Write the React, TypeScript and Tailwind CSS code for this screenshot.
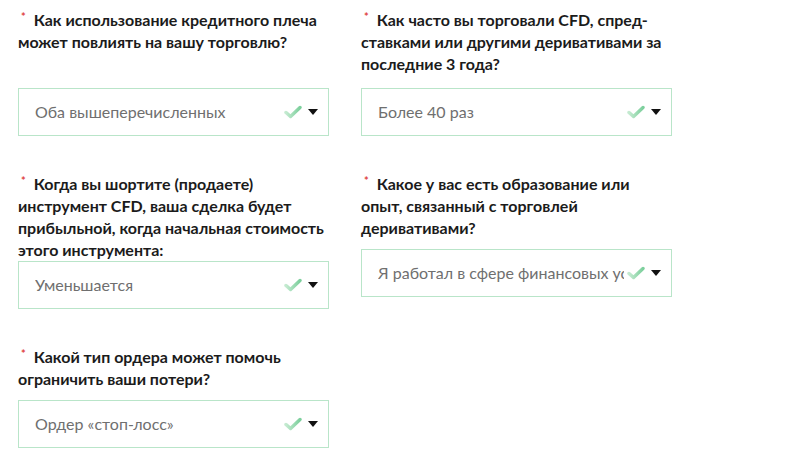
const fields = [
  {
    lines: ["Как использование кредитного плеча", "может повлиять на вашу торговлю?"],
    value: "Оба вышеперечисленных",
    labelH: "h-[79px]",
  },
  {
    lines: ["Как часто вы торговали CFD, спред-", "ставками или другими деривативами за", "последние 3 года?"],
    value: "Более 40 раз",
    labelH: "h-[79px]",
  },
  {
    lines: [
      "Когда вы шортите (продаете)",
      "инструмент CFD, ваша сделка будет",
      "прибыльной, когда начальная стоимость",
      "этого инструмента:",
    ],
    value: "Уменьшается",
    labelH: "h-[88px]",
  },
  {
    lines: ["Какое у вас есть образование или", "опыт, связанный с торговлей", "деривативами?"],
    value: "Я работал в сфере финансовых услуг",
    labelH: "h-[76px]",
  },
  {
    lines: ["Какой тип ордера может помочь", "ограничить ваши потери?"],
    value: "Ордер «стоп-лосс»",
    labelH: "h-[54px]",
  },
];

function Check() {
  return (
    <svg width="18" height="14" viewBox="0 0 18 14" className="shrink-0">
      <defs>
        <linearGradient id="chk" x1="0" y1="0" x2="1" y2="0">
          <stop offset="0" stopColor="#c4ead0" />
          <stop offset="1" stopColor="#7ccf9c" />
        </linearGradient>
      </defs>
      <path
        d="M2 7.5 L6.5 11.5 L16 2.5"
        fill="none"
        stroke="url(#chk)"
        strokeWidth="3.4"
        strokeLinecap="round"
        strokeLinejoin="round"
      />
    </svg>
  );
}

function Caret() {
  return (
    <svg width="10" height="6" viewBox="0 0 10 6" className="shrink-0">
      <path d="M0 0 H10 L5 6 Z" fill="#111" />
    </svg>
  );
}

function Field({ lines, value, labelH }: { lines: string[]; value: string; labelH: string }) {
  return (
    <div className="flex flex-col">
      <div className={`${labelH} text-[16px] font-bold leading-[22px] text-[#1b1b1b]`}>
        {lines.map((l, i) => (
          <div key={l} className="whitespace-nowrap">
            {i === 0 && (
              <span className="ml-[3px] mr-[8px] inline-block align-top text-[11px] leading-[16px] text-[#e0443f]">
                *
              </span>
            )}
            {l}
          </div>
        ))}
      </div>
      <div className="relative flex h-[48px] items-center border border-[#b9e5c9] bg-white pl-[16px]">
        <span className="mr-[47px] min-w-0 flex-1 overflow-hidden whitespace-nowrap text-[16px] text-[#6f6f6f]">
          {value}
        </span>
        <div className="absolute right-[10px] top-1/2 flex -translate-y-1/2 items-center gap-[6px]">
          <Check />
          <Caret />
        </div>
      </div>
    </div>
  );
}

export default function App() {
  return (
    <div
      className="h-[461px] w-[800px] bg-white pl-[18px] pt-[9px]"
      style={{ fontFamily: "Lato, 'Noto Sans', sans-serif" }}
    >
      <div className="grid w-[654px] grid-cols-2 items-start gap-x-[32px] gap-y-[37px]">
        {fields.map((f) => (
          <Field key={f.value} {...f} />
        ))}
      </div>
    </div>
  );
}
